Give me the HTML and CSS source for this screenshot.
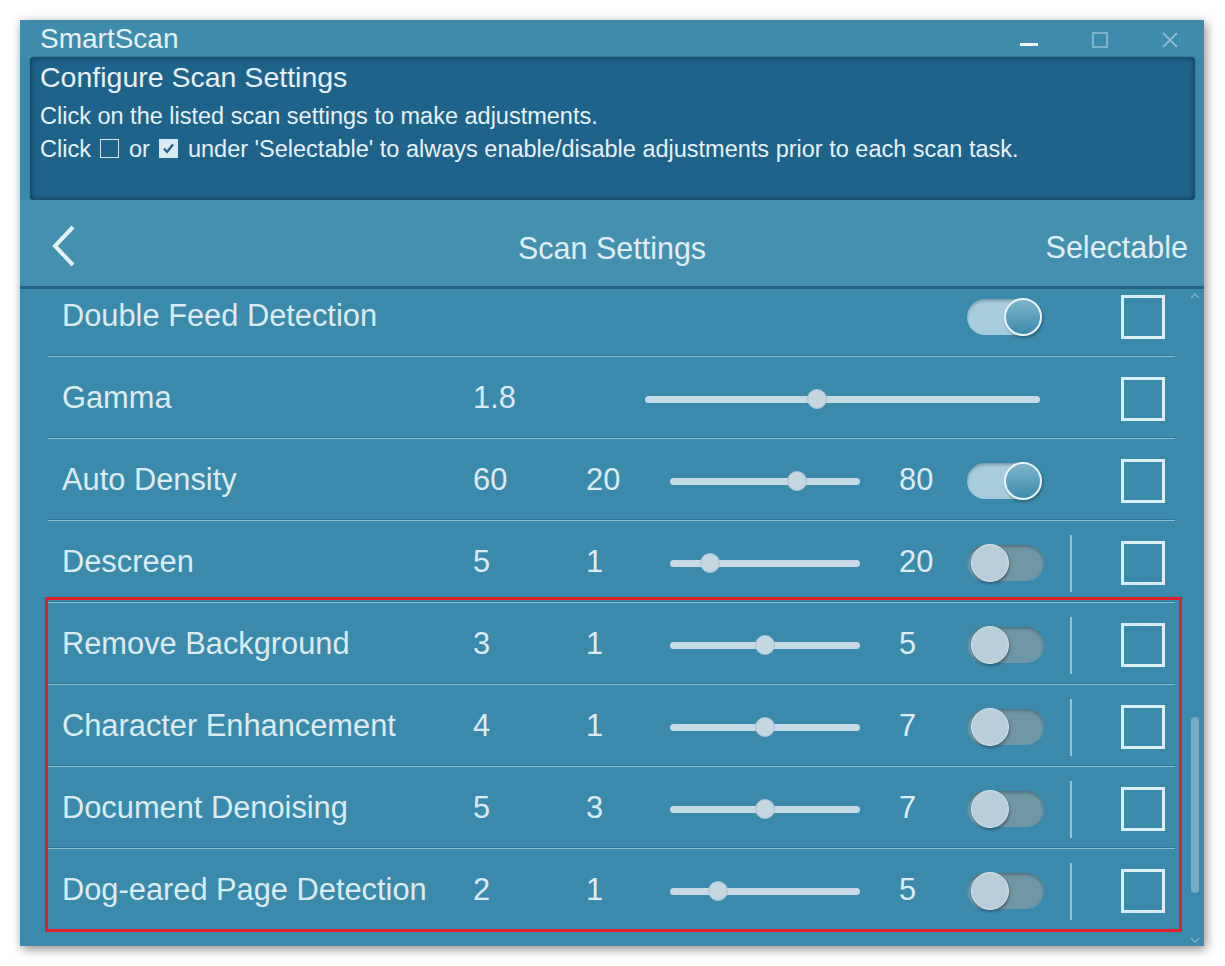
FILE: index.html
```html
<!DOCTYPE html>
<html lang="en">
<head>
  <meta charset="UTF-8">
  <title>SmartScan</title>
  <link rel="stylesheet" href="styles.css">
</head>
<body>
  <div class="window">
    <div class="titlebar">
      <span class="app-name">SmartScan</span>
      <div class="win-controls">
        <svg width="18" height="16" viewBox="0 0 18 16"><rect x="0" y="11" width="18" height="3" fill="#f2f8fb"/></svg>
        <svg width="16" height="16" viewBox="0 0 16 16"><rect x="1" y="1" width="14" height="14" fill="none" stroke="#8cbdd3" stroke-width="1.6"/></svg>
        <svg width="16" height="16" viewBox="0 0 16 16"><path d="M1 1L15 15M15 1L1 15" stroke="#8cbdd3" stroke-width="1.8"/></svg>
      </div>
    </div>

    <div class="intro">
      <h1>Configure Scan Settings</h1>
      <p>Click on the listed scan settings to make adjustments.</p>
      <p>Click <span class="mini-box"></span> or <span class="mini-box checked"><svg width="19" height="19" viewBox="0 0 19 19"><path d="M5 9.5L8 13L14 5.5" fill="none" stroke="#1f628a" stroke-width="2.2"/></svg></span> under 'Selectable' to always enable/disable adjustments prior to each scan task.</p>
    </div>

    <div class="header">
      <button class="back" title="Back">
        <svg width="28" height="44" viewBox="0 0 28 44"><polyline points="23,3 5,22 23,41" fill="none" stroke="#e4f0f6" stroke-width="4"/></svg>
      </button>
      <h2>Scan Settings</h2>
      <span class="selectable">Selectable</span>
    </div>

    <div class="list">
      <div class="rows">
        <div class="row">
          <span class="label">Double Feed Detection</span>
          <span class="toggle on"><span class="knob"></span></span>
          <span class="check"></span>
        </div>
        <div class="row">
          <span class="label">Gamma</span>
          <span class="num value">1.8</span>
          <div class="slider wide"><span class="thumb" style="left:43.5%"></span></div>
          <span class="check"></span>
        </div>
        <div class="row">
          <span class="label">Auto Density</span>
          <span class="num value">60</span>
          <span class="num min">20</span>
          <div class="slider"><span class="thumb" style="left:66.7%"></span></div>
          <span class="num max">80</span>
          <span class="toggle on"><span class="knob"></span></span>
          <span class="check"></span>
        </div>
        <div class="row">
          <span class="label">Descreen</span>
          <span class="num value">5</span>
          <span class="num min">1</span>
          <div class="slider"><span class="thumb" style="left:21%"></span></div>
          <span class="num max">20</span>
          <span class="toggle"><span class="knob"></span></span>
          <span class="divider"></span>
          <span class="check"></span>
        </div>

        <div class="highlight">
          <div class="row">
            <span class="label">Remove Background</span>
            <span class="num value">3</span>
            <span class="num min">1</span>
            <div class="slider"><span class="thumb" style="left:50%"></span></div>
            <span class="num max">5</span>
            <span class="toggle"><span class="knob"></span></span>
            <span class="divider"></span>
            <span class="check"></span>
          </div>
          <div class="row">
            <span class="label">Character Enhancement</span>
            <span class="num value">4</span>
            <span class="num min">1</span>
            <div class="slider"><span class="thumb" style="left:50%"></span></div>
            <span class="num max">7</span>
            <span class="toggle"><span class="knob"></span></span>
            <span class="divider"></span>
            <span class="check"></span>
          </div>
          <div class="row">
            <span class="label">Document Denoising</span>
            <span class="num value">5</span>
            <span class="num min">3</span>
            <div class="slider"><span class="thumb" style="left:50%"></span></div>
            <span class="num max">7</span>
            <span class="toggle"><span class="knob"></span></span>
            <span class="divider"></span>
            <span class="check"></span>
          </div>
          <div class="row">
            <span class="label">Dog-eared Page Detection</span>
            <span class="num value">2</span>
            <span class="num min">1</span>
            <div class="slider"><span class="thumb" style="left:25%"></span></div>
            <span class="num max">5</span>
            <span class="toggle"><span class="knob"></span></span>
            <span class="divider"></span>
            <span class="check"></span>
          </div>
        </div>
      </div>

      <div class="scrollbar">
        <svg width="10" height="6" viewBox="0 0 10 6"><polyline points="1,5 5,1 9,5" fill="none" stroke="#7fb2c8" stroke-width="1.3"/></svg>
        <span class="scroll-thumb"></span>
        <svg width="10" height="6" viewBox="0 0 10 6"><polyline points="1,1 5,5 9,1" fill="none" stroke="#7fb2c8" stroke-width="1.3"/></svg>
      </div>
    </div>
  </div>
</body>
</html>
```

FILE: styles.css
```css
body {
  margin: 0;
  padding: 20px;
  background: #fff;
  font-family: 'Liberation Sans', Arial, sans-serif;
  color: #dcebf2;
}
.window {
  width: 1184px;
  height: 926px;
  background: #3c8aab;
  box-shadow: 2px 3px 10px rgba(0,0,0,0.45);
  display: flex;
  flex-direction: column;
  overflow: hidden;
}
.titlebar {
  height: 37px;
  flex: none;
  display: flex;
  align-items: center;
  justify-content: space-between;
  padding: 0 26px 0 20px;
  background: #3e8bab;
}
.app-name {
  font-size: 28px;
  color: #e6f2f8;
}
.win-controls {
  display: flex;
  align-items: center;
  gap: 54px;
  padding-top: 2px;
}
.intro {
  flex: none;
  height: 143px;
  margin: 0 9px 0 10px;
  padding: 0 10px;
  box-sizing: border-box;
  background: #1f628a;
  border-radius: 4px;
  box-shadow: inset 0 0 7px rgba(0,0,0,0.45), 0 0 2px rgba(0,0,0,0.3);
}
.intro h1 {
  margin: 0 0 3px;
  font-size: 28.5px;
  font-weight: normal;
  line-height: 40px;
  color: #e6f2f8;
}
.intro p {
  margin: 0;
  font-size: 23.5px;
  line-height: 33px;
  color: #e6f2f8;
}
.mini-box {
  display: inline-block;
  width: 19px;
  height: 19px;
  margin: 0 3px;
  box-sizing: border-box;
  border: 1.5px solid #d4e6ef;
  vertical-align: -1px;
}
.mini-box.checked {
  background: #dbe9f0;
  border: none;
}
.mini-box svg {
  display: block;
}
.header {
  flex: none;
  height: 89px;
  display: grid;
  grid-template-columns: 1fr auto 1fr;
  align-items: center;
  padding: 10px 16px 0;
  box-sizing: border-box;
  background: #4690af;
  border-bottom: 3px solid #246283;
}
.back {
  justify-self: start;
  margin-left: 14px;
  margin-top: -4px;
  background: none;
  border: none;
  padding: 0;
  cursor: pointer;
  display: flex;
}
.header h2 {
  margin: 0;
  font-size: 30.5px;
  font-weight: normal;
  color: #e0eef5;
}
.selectable {
  justify-self: end;
  margin-top: -2px;
  font-size: 30.5px;
  color: #e0eef5;
}
.list {
  flex: 1;
  display: flex;
  overflow: hidden;
}
.rows {
  width: 1128px;
  margin: -15px 0 0 28px;
}
.row {
  height: 82px;
  box-sizing: border-box;
  display: grid;
  grid-template-columns: 411px 113px 84px 190px 39px 67px 80px 75px 44px;
  align-items: center;
  padding: 5px 0 0 14px;
  border-bottom: 1px solid #2f7495;
  box-shadow: 0 1px 0 #8cbfd4;
  font-size: 30.8px;
}
.label {
  grid-column: 1;
  margin-top: -2px;
}
.value {
  grid-column: 2;
  margin-top: -2px;
}
.min {
  grid-column: 3;
  margin-top: -2px;
}
.max {
  grid-column: 6;
  margin-top: -2px;
}
.slider {
  grid-column: 4;
  position: relative;
  height: 7px;
  border-radius: 4px;
  background: #c5dae4;
}
.slider.wide {
  grid-column: 3 / 8;
  margin: 0 6px 0 59px;
}
.thumb {
  position: absolute;
  top: 50%;
  width: 20px;
  height: 20px;
  border-radius: 50%;
  background: #c4d6df;
  border: 1px solid #a9c3cf;
  box-sizing: border-box;
  transform: translate(-50%, -50%);
}
.toggle {
  grid-column: 7;
  justify-self: start;
  margin-left: 1px;
  position: relative;
  width: 77px;
  height: 36px;
  border-radius: 18px;
  background: #6f97a6;
  box-shadow: inset 0 2px 3px rgba(0,0,0,0.25);
}
.toggle.on {
  background: #a7cddd;
  width: 73px;
}
.knob {
  position: absolute;
  top: -1px;
  left: 4px;
  width: 38px;
  height: 38px;
  box-sizing: border-box;
  border-radius: 50%;
  background: #b8cfdb;
  border: 1.5px solid #d6e5ec;
  box-shadow: 1px 2px 3px rgba(0,0,0,0.3);
}
.toggle.on .knob {
  left: auto;
  right: -2px;
  background: linear-gradient(#7db4cc, #3f8aad);
  border: 2.5px solid #eaf4f8;
}
.divider {
  grid-column: 8;
  justify-self: start;
  margin-left: 24px;
  width: 2px;
  height: 57px;
  background: #94c4d8;
}
.check {
  grid-column: 9;
  width: 44px;
  height: 44px;
  box-sizing: border-box;
  border: 3px solid #dbeef7;
}
.highlight {
  position: relative;
}
.highlight::after {
  content: "";
  position: absolute;
  top: -5px;
  left: -3px;
  right: -7px;
  bottom: -2px;
  border: 3.5px solid #e11f2a;
  pointer-events: none;
}
.scrollbar {
  flex: 1;
  display: flex;
  flex-direction: column;
  align-items: center;
  padding: 4px 4px 3px 15px;
}
.scroll-thumb {
  width: 8px;
  height: 176px;
  margin: auto 0 44px;
  border-radius: 4px;
  background: #77abc2;
}
```
